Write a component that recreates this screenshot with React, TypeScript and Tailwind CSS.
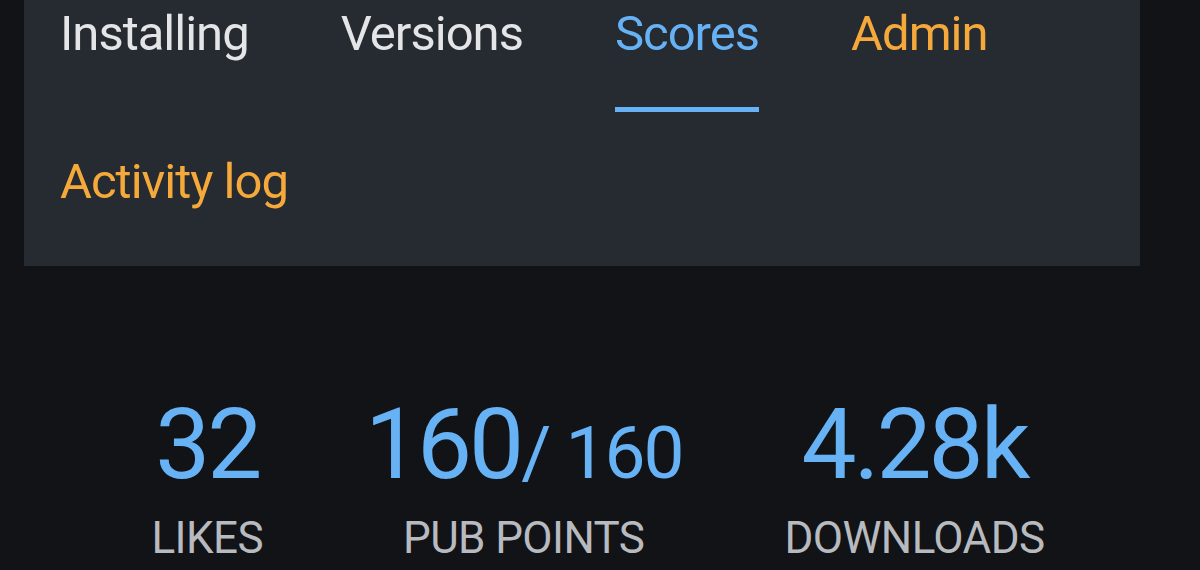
const tabs = [
  { label: 'Installing', color: 'text-[#e4e5e7]' },
  { label: 'Versions', color: 'text-[#e4e5e7]' },
  { label: 'Scores', color: 'text-[#66b2f5]', active: true },
  { label: 'Admin', color: 'text-[#f6a93b]' },
  { label: 'Activity log', color: 'text-[#f6a93b]' },
];

function Stat({ value, suffix, label }: { value: string; suffix?: string; label: string }) {
  return (
    <div className="flex flex-col items-center">
      <div className="text-[98px] leading-none tracking-[-3px] text-[#66b2f5] whitespace-nowrap">
        {value}
        {suffix && <span className="text-[73px] tracking-[-2px]">{suffix}</span>}
      </div>
      <div className="mt-[17px] text-[44px] leading-[54px] tracking-[-0.6px] text-[#b7babf] uppercase">{label}</div>
    </div>
  );
}

export default function App() {
  return (
    <div className="w-[1200px] h-[570px] overflow-hidden bg-[#121317] font-['Roboto',sans-serif]">
      <div className="mx-6 w-[1116px] bg-[#262a31] pl-9 pr-9 pt-[4px] pb-[6px]">
        <nav className="flex flex-wrap gap-x-[92px] gap-y-10">
          {tabs.map(t => (
            <a
              key={t.label}
              className={`text-[49px] leading-[60px] tracking-[-1px] pb-[43px] border-b-[5px] whitespace-nowrap ${t.color} ${
                t.active ? 'border-[#66b2f5] tracking-[-0.2px]' : 'border-transparent'
              }`}
            >
              {t.label}
            </a>
          ))}
        </nav>
      </div>
      <div className="mt-[130px] flex justify-center gap-[102px] -translate-x-[2px]">
        <Stat value="32" label="Likes" />
        <Stat value="160" suffix="/ 160" label="Pub points" />
        <Stat value="4.28k" label="Downloads" />
      </div>
    </div>
  );
}
